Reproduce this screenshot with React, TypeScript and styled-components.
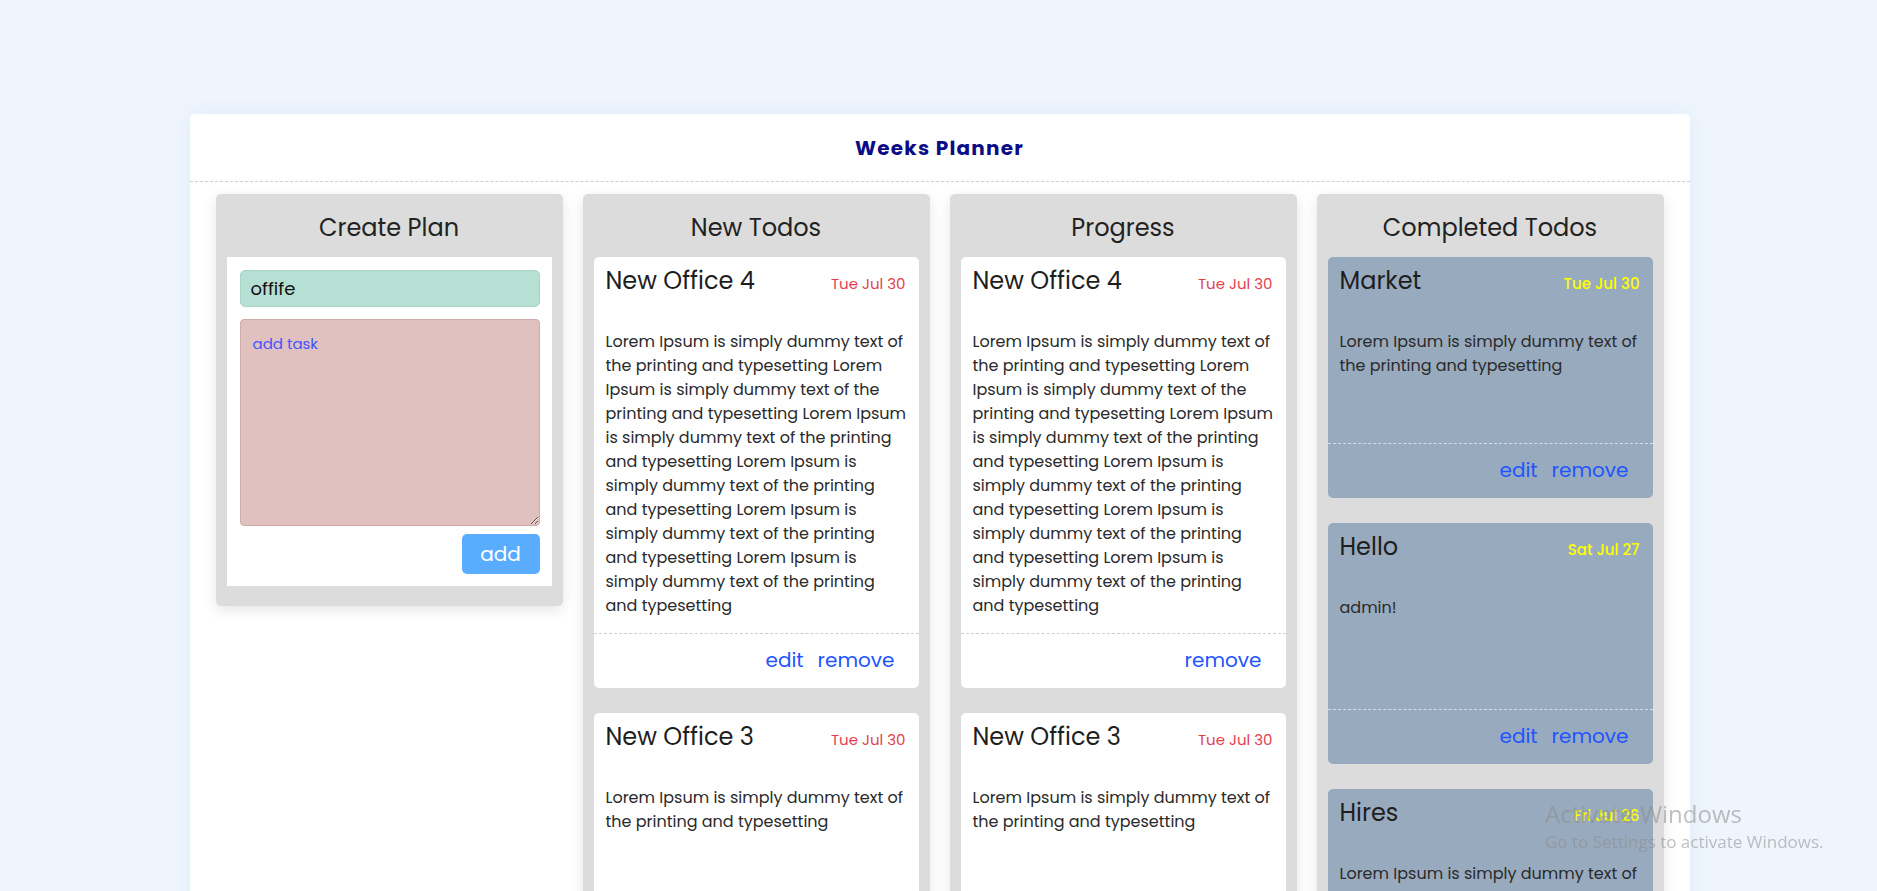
import React from "react";
import styled, { createGlobalStyle } from "styled-components";

const GlobalStyle = createGlobalStyle`
  html, body {
    margin: 0;
    padding: 0;
    overflow: hidden;
  }
  body {
    background: #eef5fd;
    font-family: "Poppins", "Open Sans", "Noto Sans", sans-serif;
    color: #222;
  }
  * { box-sizing: border-box; }
`;

const Page = styled.div`
  height: 100vh;
  overflow: hidden;
  padding: 114px 0 0 2px;
`;

const Board = styled.main`
  width: 1500px;
  margin: 0 auto;
  min-height: 900px;
  background: #fff;
  border-radius: 5px;
  box-shadow: 0 0 22px rgba(30, 60, 120, 0.06);
`;

const Header = styled.header`
  height: 68px;
  display: flex;
  align-items: center;
  justify-content: center;
  border-bottom: 1px dashed #cfcfcf;
`;

const Title = styled.h1`
  margin: 0;
  font-size: 20px;
  font-weight: 700;
  letter-spacing: 1.2px;
  color: #0c0c86;
`;

const Columns = styled.div`
  display: grid;
  grid-template-columns: repeat(4, minmax(0, 1fr));
  gap: 20px;
  padding: 12px 26px 0;
  align-items: start;
`;

const Column = styled.section`
  background: #dcdcdc;
  border-radius: 5px;
  padding: 0 11px 20px;
  box-shadow: 0 4px 14px rgba(0, 0, 0, 0.1);
`;

const ColumnTitle = styled.h2`
  margin: 0;
  height: 63px;
  padding-top: 3px;
  display: flex;
  align-items: center;
  justify-content: center;
  font-size: 24px;
  font-weight: 400;
  color: #222;
`;

const FormBox = styled.form`
  background: #fff;
  padding: 13px 12px 12px 13px;
  display: flex;
  flex-direction: column;
`;

const TitleInput = styled.input`
  width: 100%;
  height: 37px;
  background: #b6e0d3;
  border: 1px solid #a9d3c4;
  border-radius: 5px;
  padding: 0 10px;
  font-family: inherit;
  font-size: 18px;
  color: #111;
  outline: none;
`;

const TaskArea = styled.textarea`
  width: 100%;
  margin-top: 12px;
  height: 207px;
  background: #e1c1c0;
  border: 1px solid #cfabaa;
  border-radius: 4px;
  padding: 12px 12px;
  font-family: inherit;
  font-size: 15px;
  color: #222;
  outline: none;
  resize: vertical;
  &::placeholder {
    color: #3f55ff;
  }
`;

const AddButton = styled.button`
  align-self: flex-end;
  margin-top: 8px;
  width: 78px;
  height: 40px;
  background: #5aacff;
  color: #fff;
  border: none;
  border-radius: 5px;
  font-family: inherit;
  font-size: 20px;
  cursor: pointer;
`;

const Card = styled.article<{ $done?: boolean }>`
  background: ${(p) => (p.$done ? "#98aabe" : "#fff")};
  border-radius: 5px;
  margin-bottom: 25px;
  overflow: hidden;
`;

const CardHead = styled.div`
  display: flex;
  align-items: baseline;
  justify-content: space-between;
  padding: 9px 13px 0 12px;
`;

const CardTitle = styled.h3`
  margin: 0;
  font-size: 24px;
  line-height: 30px;
  font-weight: 400;
  color: #1e1e1e;
`;

const CardDate = styled.span<{ $done?: boolean }>`
  font-size: 15px;
  color: ${(p) => (p.$done ? "#ffff00" : "#e4404f")};
  font-weight: ${(p) => (p.$done ? 500 : 400)};
`;

const CardBody = styled.p`
  margin: 34px 0 0;
  padding: 0 12px 15px;
  min-height: 113px;
  font-size: 16px;
  line-height: 24px;
  color: #2a2a2a;
`;

const CardFoot = styled.div<{ $done?: boolean }>`
  height: 55px;
  border-top: 1px dashed ${(p) => (p.$done ? "#d6dde6" : "#cfcfcf")};
  display: flex;
  align-items: center;
  justify-content: flex-end;
  gap: 14px;
  padding: 0 24px 2px 0;
`;

const LinkButton = styled.a`
  font-size: 20px;
  color: #1f55ff;
  text-decoration: none;
  cursor: pointer;
`;

const Watermark = styled.div`
  position: fixed;
  left: 1545px;
  top: 797px;
  color: rgba(140, 140, 140, 0.55);
  font-family: "Open Sans", "Noto Sans", sans-serif;
  pointer-events: none;
`;

const WatermarkTitle = styled.div`
  font-size: 24px;
  line-height: 34px;
`;

const WatermarkSub = styled.div`
  font-size: 17px;
  line-height: 22px;
`;

const unit = "Lorem Ipsum is simply dummy text of the printing and typesetting";
const longText = Array(6).fill(unit).join(" ");

type Todo = {
  title: string;
  date: string;
  text: string;
  edit?: boolean;
  done?: boolean;
};

const newTodos: Todo[] = [
  { title: "New Office 4", date: "Tue Jul 30", text: longText, edit: true },
  { title: "New Office 3", date: "Tue Jul 30", text: unit, edit: true },
];

const progress: Todo[] = [
  { title: "New Office 4", date: "Tue Jul 30", text: longText },
  { title: "New Office 3", date: "Tue Jul 30", text: unit },
];

const completed: Todo[] = [
  { title: "Market", date: "Tue Jul 30", text: unit, edit: true, done: true },
  { title: "Hello", date: "Sat Jul 27", text: "admin!", edit: true, done: true },
  { title: "Hires", date: "Fri Jul 26", text: unit, edit: true, done: true },
];

function TodoCard({ todo }: { todo: Todo }) {
  return (
    <Card $done={todo.done}>
      <CardHead>
        <CardTitle>{todo.title}</CardTitle>
        <CardDate $done={todo.done}>{todo.date}</CardDate>
      </CardHead>
      <CardBody>{todo.text}</CardBody>
      <CardFoot $done={todo.done}>
        {todo.edit && <LinkButton>edit</LinkButton>}
        <LinkButton>remove</LinkButton>
      </CardFoot>
    </Card>
  );
}

export default function App() {
  return (
    <>
      <GlobalStyle />
      <Page>
        <Board>
          <Header>
            <Title>Weeks Planner</Title>
          </Header>
          <Columns>
            <Column>
              <ColumnTitle>Create Plan</ColumnTitle>
              <FormBox onSubmit={(e) => e.preventDefault()}>
                <TitleInput defaultValue="offife" />
                <TaskArea placeholder="add task" />
                <AddButton type="submit">add</AddButton>
              </FormBox>
            </Column>
            <Column>
              <ColumnTitle>New Todos</ColumnTitle>
              {newTodos.map((t, i) => (
                <TodoCard key={i} todo={t} />
              ))}
            </Column>
            <Column>
              <ColumnTitle>Progress</ColumnTitle>
              {progress.map((t, i) => (
                <TodoCard key={i} todo={t} />
              ))}
            </Column>
            <Column>
              <ColumnTitle>Completed Todos</ColumnTitle>
              {completed.map((t, i) => (
                <TodoCard key={i} todo={t} />
              ))}
            </Column>
          </Columns>
        </Board>
      </Page>
      <Watermark>
        <WatermarkTitle>Activate Windows</WatermarkTitle>
        <WatermarkSub>Go to Settings to activate Windows.</WatermarkSub>
      </Watermark>
    </>
  );
}
